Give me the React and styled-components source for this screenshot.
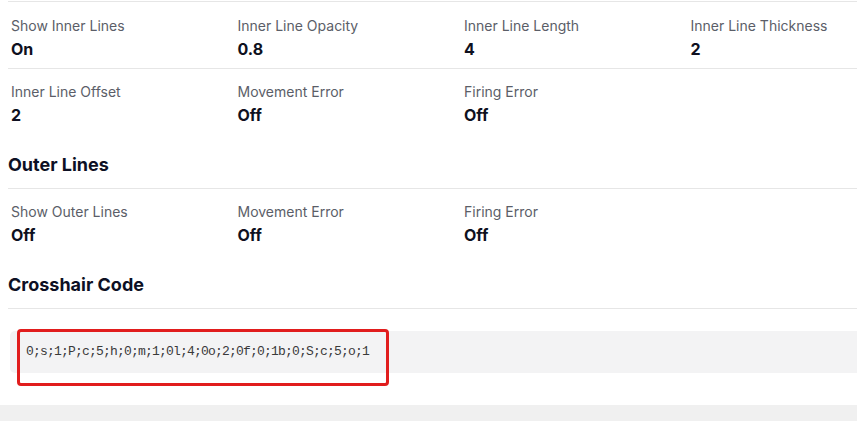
import React from 'react';
import styled, { createGlobalStyle } from 'styled-components';

const GlobalStyle = createGlobalStyle`
  html, body {
    margin: 0;
    padding: 0;
    background: #f0f0f0;
    overflow: hidden;
  }
  body {
    font-family: Inter, "Noto Sans", "Liberation Sans", sans-serif;
  }
`;

const Page = styled.div`
  background: #ffffff;
  padding: 1px 0 32px 8px;
`;

const Content = styled.div`
  width: 906px;
`;

const Row = styled.div`
  display: grid;
  grid-template-columns: repeat(4, 1fr);
  padding: ${props => (props.$top ? '14px 0 7px' : '13px 0 8px')};
  border-top: ${props => (props.$top ? '1px solid #e6e6e6' : 'none')};
  border-bottom: ${props => (props.$divider ? '1px solid #e6e6e6' : 'none')};
`;

const Item = styled.div`
  padding: 0 3px;
  display: flex;
  flex-direction: column;
  gap: 1px;
`;

const Label = styled.div`
  font-size: 14px;
  line-height: 20px;
  color: #5b5e68;
`;

const Value = styled.div`
  font-size: 16px;
  line-height: 24px;
  font-weight: 700;
  color: #0e1020;
`;

const SectionTitle = styled.h3`
  margin: 16px 0 0;
  padding-bottom: 9px;
  font-size: 18px;
  line-height: 28px;
  font-weight: 700;
  color: #0d1024;
  border-bottom: 1px solid #e6e6e6;
`;

const CodeWrap = styled.div`
  position: relative;
  margin: 22px 0 0 2px;
`;

const CodeBlock = styled.pre`
  margin: 0;
  padding: 12px 16px;
  background: #f3f3f4;
  border-radius: 5px;
  font-family: "Liberation Mono", "DejaVu Sans Mono", monospace;
  font-size: 13px;
  letter-spacing: -0.8px;
  line-height: 18px;
  color: #3a3a3a;
`;

const Highlight = styled.div`
  position: absolute;
  left: 7px;
  top: -2px;
  width: 372px;
  height: 57px;
  box-sizing: border-box;
  border: 3px solid #e11d1d;
  border-radius: 4px;
  pointer-events: none;
`;

const sections = [
  {
    rows: [
      [
        ['Show Inner Lines', 'On'],
        ['Inner Line Opacity', '0.8'],
        ['Inner Line Length', '4'],
        ['Inner Line Thickness', '2'],
      ],
      [
        ['Inner Line Offset', '2'],
        ['Movement Error', 'Off'],
        ['Firing Error', 'Off'],
      ],
    ],
  },
  {
    title: 'Outer Lines',
    rows: [
      [
        ['Show Outer Lines', 'Off'],
        ['Movement Error', 'Off'],
        ['Firing Error', 'Off'],
      ],
    ],
  },
];

const crosshairCode = '0;s;1;P;c;5;h;0;m;1;0l;4;0o;2;0f;0;1b;0;S;c;5;o;1';

const App = () => {
  return (
    <>
      <GlobalStyle />
      <Page>
        <Content>
          {sections.map((section, si) => (
            <React.Fragment key={si}>
              {section.title && <SectionTitle>{section.title}</SectionTitle>}
              {section.rows.map((row, ri) => (
                <Row
                  key={ri}
                  $top={si === 0 && ri === 0}
                  $divider={ri < section.rows.length - 1}
                >
                  {row.map(([label, value]) => (
                    <Item key={label}>
                      <Label>{label}</Label>
                      <Value>{value}</Value>
                    </Item>
                  ))}
                </Row>
              ))}
            </React.Fragment>
          ))}

          <SectionTitle>Crosshair Code</SectionTitle>
          <CodeWrap>
            <CodeBlock>{crosshairCode}</CodeBlock>
            <Highlight />
          </CodeWrap>
        </Content>
      </Page>
    </>
  );
};

export default App;
